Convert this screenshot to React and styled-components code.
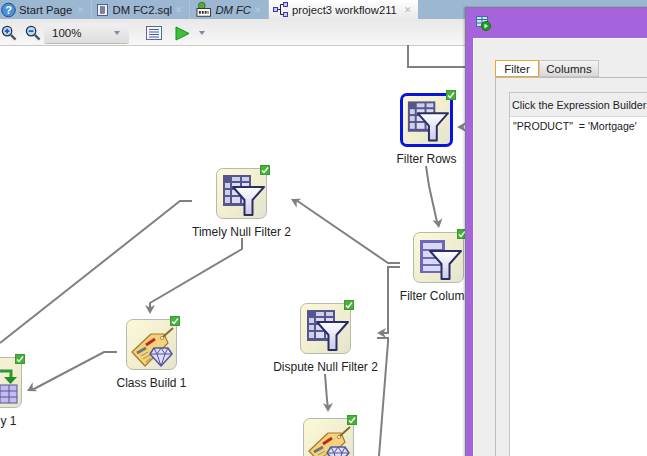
import React from "react";
import styled, { createGlobalStyle } from "styled-components";

const GlobalStyle = createGlobalStyle`
  html, body {
    margin: 0;
    padding: 0;
    background: #fff;
  }
  body {
    font-family: "Liberation Sans", Arial, sans-serif;
  }
`;

const Page = styled.div`
  position: relative;
  width: 647px;
  height: 456px;
  overflow: hidden;
  display: flex;
  flex-direction: column;
  font-size: 12px;
  color: #1d2026;
`;

const TabBar = styled.div`
  display: flex;
  height: 19px;
  flex: none;
  background: #9cb7d2;
  font-size: 11.25px;
`;

const Tab = styled.div`
  display: flex;
  align-items: center;
  gap: 3px;
  width: ${(p) => p.$width}px;
  padding-left: ${(p) => p.$pad || 0}px;
  box-sizing: border-box;
  background: ${(p) => (p.$active ? "linear-gradient(#fff, #e9e9e9)" : "transparent")};
  border-right: ${(p) => (p.$active ? "none" : "1px solid #aec3d8")};
  font-style: ${(p) => (p.$italic ? "italic" : "normal")};
  white-space: nowrap;
`;

const TabClose = styled.span`
  margin-left: auto;
  margin-right: 6px;
  font-size: 9px;
  color: ${(p) => (p.$active ? "#b5b5b5" : "#b9cbdd")};
  font-style: normal;
`;

const Toolbar = styled.div`
  display: flex;
  align-items: center;
  height: 27px;
  flex: none;
  box-sizing: border-box;
  padding: 2px 0 0 1px;
  background: linear-gradient(#e8e8e8, #f7f7f7);
  border-bottom: 1px solid #c9c9c9;
`;

const ToolIcon = styled.svg`
  flex: none;
  margin-right: ${(p) => p.$gap || 0}px;
`;

const ZoomSelect = styled.div`
  display: flex;
  align-items: center;
  justify-content: space-between;
  width: 85px;
  height: 20px;
  box-sizing: border-box;
  padding: 0 9px 0 8px;
  margin-right: 17px;
  border-radius: 3px;
  font-size: 11.5px;
  background: linear-gradient(#f0f0f0, #dedede);
  box-shadow: 0 1px 0 #bdbdbd;
`;

const Caret = styled.span`
  width: 0;
  height: 0;
  border-left: 3.5px solid transparent;
  border-right: 3.5px solid transparent;
  border-top: 4px solid #6f8db5;
`;

const Canvas = styled.div`
  position: relative;
  flex: 1;
  background: #fff;
`;

const Edges = styled.svg`
  position: absolute;
  left: 0;
  top: -46px;
  width: 647px;
  height: 456px;
`;

const Node = styled.div`
  position: absolute;
  left: ${(p) => p.$x}px;
  top: ${(p) => p.$y - 46}px;
  width: ${(p) => p.$w || 51}px;
  height: ${(p) => p.$h || 51}px;
`;

const NodeBox = styled.div`
  width: 100%;
  height: 100%;
  box-sizing: border-box;
  display: flex;
  align-items: center;
  justify-content: center;
  border-radius: 7px;
  background: linear-gradient(135deg, #fbf9d8, #f0eecf 55%, #e4e4cf);
  border: ${(p) => (p.$selected ? "3px solid #0a14e0" : "1px solid #b9b9ab")};
`;

const Check = styled.span`
  position: absolute;
  right: -3px;
  top: -3px;
  width: 10px;
  height: 10px;
  box-sizing: border-box;
  display: flex;
  align-items: center;
  justify-content: center;
  background: #46b23a;
  border: 1px solid #3a9a30;
`;

const NodeLabel = styled.div`
  position: absolute;
  top: 100%;
  left: 50%;
  transform: translateX(-50%);
  margin-top: ${(p) => (p.$selected ? 5 : 6)}px;
  white-space: nowrap;
  font-size: 12px;
  line-height: 14px;
  color: #222;
`;

const Dialog = styled.div`
  position: absolute;
  left: 465px;
  top: 7px;
  width: 190px;
  height: 460px;
  box-sizing: border-box;
  display: flex;
  flex-direction: column;
  background: #a563dc;
  border: 1px solid #85769c;
  box-shadow: -1px 0 2px rgba(0, 0, 0, 0.25);
  padding-left: 7px;
`;

const DialogTitle = styled.div`
  display: flex;
  align-items: center;
  height: 30px;
  flex: none;
  padding-left: 3px;
`;

const DialogBody = styled.div`
  flex: 1;
  display: flex;
  flex-direction: column;
  background: #eeeeee;
  border: 1px solid #f6f6f6;
  padding: 21px 0 0 21px;
`;

const DialogTabs = styled.div`
  display: flex;
  height: 17px;
  flex: none;
`;

const DialogTab = styled.div`
  display: flex;
  align-items: center;
  justify-content: center;
  box-sizing: border-box;
  width: ${(p) => p.$width}px;
  background: ${(p) => (p.$active ? "#fff" : "linear-gradient(#f4f4f4, #d9d9d9)")};
  border: 1px solid ${(p) => (p.$active ? "#eba52c" : "#c6c6c6")};
  font-size: 11.5px;
`;

const TabPanel = styled.div`
  flex: 1;
  border-left: 1px solid #bdbdbd;
  border-top: 1px solid #bdbdbd;
  padding: 14px 0 0 13px;
`;

const ExprBox = styled.div`
  height: 100%;
  border-left: 1px solid #c4c4c4;
  border-top: 1px solid #c4c4c4;
  display: flex;
  flex-direction: column;
`;

const ExprHint = styled.div`
  height: 23px;
  flex: none;
  display: flex;
  align-items: center;
  padding-left: 2px;
  white-space: nowrap;
  font-size: 10.8px;
  border-bottom: 1px solid #d6d6d6;
`;

const ExprText = styled.div`
  flex: 1;
  background: #fff;
  padding: 3px 0 0 3px;
  font-size: 10.6px;
  white-space: pre;
`;

const FilterGlyph = ({ columns }) => (
  <svg width="48" height="48" viewBox="0 0 48 48">
    <defs>
      <linearGradient id="funnelFill" x1="0" y1="0" x2="0" y2="1">
        <stop offset="0" stopColor="#ffffff" />
        <stop offset="1" stopColor="#c9cae6" />
      </linearGradient>
    </defs>
    {columns ? (
      <g>
        <rect x="5" y="6" width="25" height="33" fill="#6a6ab8" />
        <rect x="8" y="9" width="19" height="6" fill="#d9d9f2" />
        <rect x="8" y="17" width="19" height="6" fill="#d9d9f2" />
        <rect x="8" y="25" width="19" height="5" fill="#d9d9f2" />
        <rect x="8" y="32" width="19" height="5" fill="#d9d9f2" />
      </g>
    ) : (
      <g>
        <rect x="5" y="5" width="28" height="31" fill="#55558f" />
        <g fill="#cfcfe8">
          <rect x="14" y="7" width="8" height="4" />
          <rect x="24" y="7" width="7" height="4" />
          <rect x="7" y="13" width="5" height="5" />
          <rect x="7" y="20" width="5" height="5" />
          <rect x="7" y="27" width="5" height="6" />
        </g>
        <g fill="#dcdcf0">
          <rect x="14" y="13" width="8" height="5" />
          <rect x="24" y="13" width="7" height="5" />
          <rect x="14" y="20" width="8" height="5" />
          <rect x="24" y="20" width="7" height="5" />
          <rect x="14" y="27" width="8" height="6" />
          <rect x="24" y="27" width="7" height="6" />
        </g>
      </g>
    )}
    <path
      d="M15 17h31l-11.5 13v15h-8V30z"
      fill="url(#funnelFill)"
      stroke="#2c2c66"
      strokeWidth="2"
      strokeLinejoin="round"
    />
  </svg>
);

const BuildGlyph = () => (
  <svg width="48" height="48" viewBox="0 0 48 48">
    <path
      d="M4 31L23 13h13l4 9-23 23z"
      fill="#f2d27c"
      stroke="#a8772c"
      strokeWidth="1.2"
      strokeLinejoin="round"
    />
    <path d="M35 16L45 7" stroke="#8a6a30" strokeWidth="2" />
    <circle cx="34" cy="17" r="1.6" fill="#fff3c8" stroke="#8a6a30" strokeWidth="0.7" />
    <path d="M18 24l9-6" stroke="#c0281f" strokeWidth="3" />
    <path d="M9 32l9-5" stroke="#74747c" strokeWidth="3" />
    <path d="M13 35l7-4M15 38l7-4M18 41l5-4" stroke="#bb9c58" strokeWidth="1.2" />
    <path
      d="M26 27h14l4 6-11 12-11-12z"
      fill="#dedef6"
      stroke="#55559f"
      strokeWidth="1.5"
      strokeLinejoin="round"
    />
    <path d="M22 33h22M29 33l4 12 4-12M26 27l3 6 4-6 4 6 3-6" fill="none" stroke="#55559f" />
  </svg>
);

const ApplyGlyph = () => (
  <svg width="48" height="48" viewBox="0 0 48 48">
    <path d="M24 12h5" stroke="#4a78d0" strokeWidth="3" />
    <path d="M28 12h10v7" fill="none" stroke="#2e9a2e" strokeWidth="3" />
    <path d="M31 18h13l-6.5 7z" fill="#1f8f1f" />
    <g fill="#c4bcea" stroke="#55559f">
      <rect x="18" y="26" width="26" height="18" />
      <path d="M18 32h26M18 38h26M27 26v18M36 26v18" fill="none" />
    </g>
  </svg>
);

const CheckMark = () => (
  <svg width="8" height="8" viewBox="0 0 8 8">
    <path d="M1 4.5l2 2 4-5" fill="none" stroke="#fff" strokeWidth="1.4" />
  </svg>
);

const Arrow = ({ x, y, angle }) => (
  <path
    d="M0 0l9-5-2.5 5 2.5 5z"
    fill="#808080"
    transform={`translate(${x} ${y}) rotate(${angle})`}
  />
);

const lines = [
  "M408 45V67H466",
  "M426 166L429 186L437 222",
  "M400 263H388L296 200",
  "M400 267H388V333H381",
  "M377 338H388V342L379 456",
  "M192 201H180L0 343",
  "M242 238V249L150 303V309",
  "M117 352H104L32 390",
  "M325 374L327 400L328 408",
];

const nodes = [
  { x: 400, y: 93, w: 53, h: 54, label: "Filter Rows", glyph: <FilterGlyph />, selected: true },
  { x: 216, y: 168, label: "Timely Null Filter 2", glyph: <FilterGlyph /> },
  { x: 413, y: 232, label: "Filter Columns", glyph: <FilterGlyph columns /> },
  { x: 300, y: 303, label: "Dispute Null Filter 2", glyph: <FilterGlyph /> },
  { x: 126, y: 319, label: "Class Build 1", glyph: <BuildGlyph /> },
  { x: 303, y: 418, glyph: <BuildGlyph /> },
  { x: -29, y: 357, label: "Apply 1", glyph: <ApplyGlyph /> },
];

const App = () => (
  <Page>
    <GlobalStyle />
    <TabBar>
      <Tab $width={92} $pad={1}>
        <svg width="15" height="16" viewBox="0 0 15 16">
          <circle cx="7.5" cy="8" r="6.8" fill="#4a90d8" stroke="#1d4f98" />
          <text x="7.5" y="12" textAnchor="middle" fontSize="11" fontWeight="700" fill="#fff">
            ?
          </text>
        </svg>
        Start Page
        <TabClose>✕</TabClose>
      </Tab>
      <Tab $width={98} $pad={5}>
        <svg width="15" height="14" viewBox="0 0 15 14">
          <rect x="0.5" y="0.5" width="12" height="13" fill="#eef1f8" stroke="#3d4a78" />
          <rect x="4" y="3" width="5" height="8" fill="#7c8498" stroke="#3c3c3c" strokeWidth="0.5" />
        </svg>
        DM FC2.sql
        <TabClose>✕</TabClose>
      </Tab>
      <Tab $width={79} $pad={6} $italic>
        <svg width="17" height="17" viewBox="0 0 17 17">
          <circle cx="6" cy="4.5" r="3.5" fill="#5aa83e" stroke="#2f7a22" />
          <rect x="1" y="7.5" width="14" height="8" fill="#fff" stroke="#333" />
          <path d="M3 11.5h10" stroke="#333" strokeWidth="3" strokeDasharray="2 1" />
        </svg>
        DM FC
        <TabClose>✕</TabClose>
      </Tab>
      <Tab $width={149} $pad={4} $active>
        <svg width="16" height="16" viewBox="0 0 16 16">
          <g fill="#c9c9f2" stroke="#3838b8">
            <rect x="0.5" y="5.5" width="4" height="4" />
            <rect x="10.5" y="0.5" width="4" height="4" />
            <rect x="10.5" y="10.5" width="4" height="4" />
          </g>
          <path d="M5 7.5h3M10 2.5H7.5v10H10" fill="none" stroke="#222" />
        </svg>
        project3 workflow211
        <TabClose $active>✕</TabClose>
      </Tab>
    </TabBar>

    <Toolbar>
      <ToolIcon width="16" height="16" viewBox="0 0 17 17" $gap={8}>
        <circle cx="6.5" cy="6.5" r="5" fill="#bcd8f0" stroke="#234" strokeWidth="1.3" />
        <path d="M4 6.5h5M6.5 4v5" stroke="#1f57c0" strokeWidth="1.8" />
        <path d="M10.5 10.5l5 5" stroke="#555" strokeWidth="2.6" />
      </ToolIcon>
      <ToolIcon width="16" height="16" viewBox="0 0 17 17" $gap={3}>
        <circle cx="6.5" cy="6.5" r="5" fill="#bcd8f0" stroke="#234" strokeWidth="1.3" />
        <path d="M4 6.5h5" stroke="#1f57c0" strokeWidth="1.8" />
        <path d="M10.5 10.5l5 5" stroke="#555" strokeWidth="2.6" />
      </ToolIcon>
      <ZoomSelect>
        100%
        <Caret />
      </ZoomSelect>
      <ToolIcon width="16" height="14" viewBox="0 0 16 14" $gap={13}>
        <rect x="0.5" y="0.5" width="15" height="13" fill="#f4f6fb" stroke="#5a6a8a" />
        <path d="M3 3.5h10M3 6h10M3 8.5h10M3 11h10" stroke="#3a62b0" />
        <path d="M3 3.5h2M3 8.5h2" stroke="#d0392b" />
      </ToolIcon>
      <ToolIcon width="15" height="15" viewBox="0 0 15 15" $gap={9}>
        <path d="M1 1l13 6.5L1 14z" fill="#3cc13c" stroke="#1c8a1c" />
      </ToolIcon>
      <Caret />
    </Toolbar>

    <Canvas>
      <Edges viewBox="0 0 647 456">
        <g fill="none" stroke="#808080" strokeWidth="2">
          {lines.map((d) => (
            <path key={d} d={d} />
          ))}
        </g>
        <Arrow x={291} y={199} angle={28} />
        <Arrow x={150} y={314} angle={-90} />
        <Arrow x={27} y={391} angle={-28} />
        <Arrow x={377} y={333} angle={0} />
        <Arrow x={439} y={228} angle={-100} />
        <Arrow x={328} y={412} angle={-90} />
        <Arrow x={457} y={127} angle={0} />
      </Edges>
      {nodes.map((n) => (
        <Node key={n.x} $x={n.x} $y={n.y} $w={n.w} $h={n.h}>
          <NodeBox $selected={n.selected}>{n.glyph}</NodeBox>
          <Check>
            <CheckMark />
          </Check>
          {n.label && <NodeLabel $selected={n.selected}>{n.label}</NodeLabel>}
        </Node>
      ))}
    </Canvas>

    <Dialog>
      <DialogTitle>
        <svg width="15" height="15" viewBox="0 0 15 15">
          <rect x="0.5" y="0.5" width="11" height="10" fill="#cfe0f4" stroke="#3b6ea8" />
          <path d="M0.5 3.5h11M0.5 7h11M6 0.5v10" stroke="#3b6ea8" />
          <circle cx="10" cy="10" r="4.5" fill="#1ea01e" stroke="#0f6f0f" />
          <path d="M8.5 7.8v4.4l3.5-2.2z" fill="#fff" />
        </svg>
      </DialogTitle>
      <DialogBody>
        <DialogTabs>
          <DialogTab $active $width={44}>Filter</DialogTab>
          <DialogTab $width={60}>Columns</DialogTab>
        </DialogTabs>
        <TabPanel>
          <ExprBox>
            <ExprHint>Click the Expression Builder icon</ExprHint>
            <ExprText>{`"PRODUCT"  = 'Mortgage'`}</ExprText>
          </ExprBox>
        </TabPanel>
      </DialogBody>
    </Dialog>
  </Page>
);

export default App;
